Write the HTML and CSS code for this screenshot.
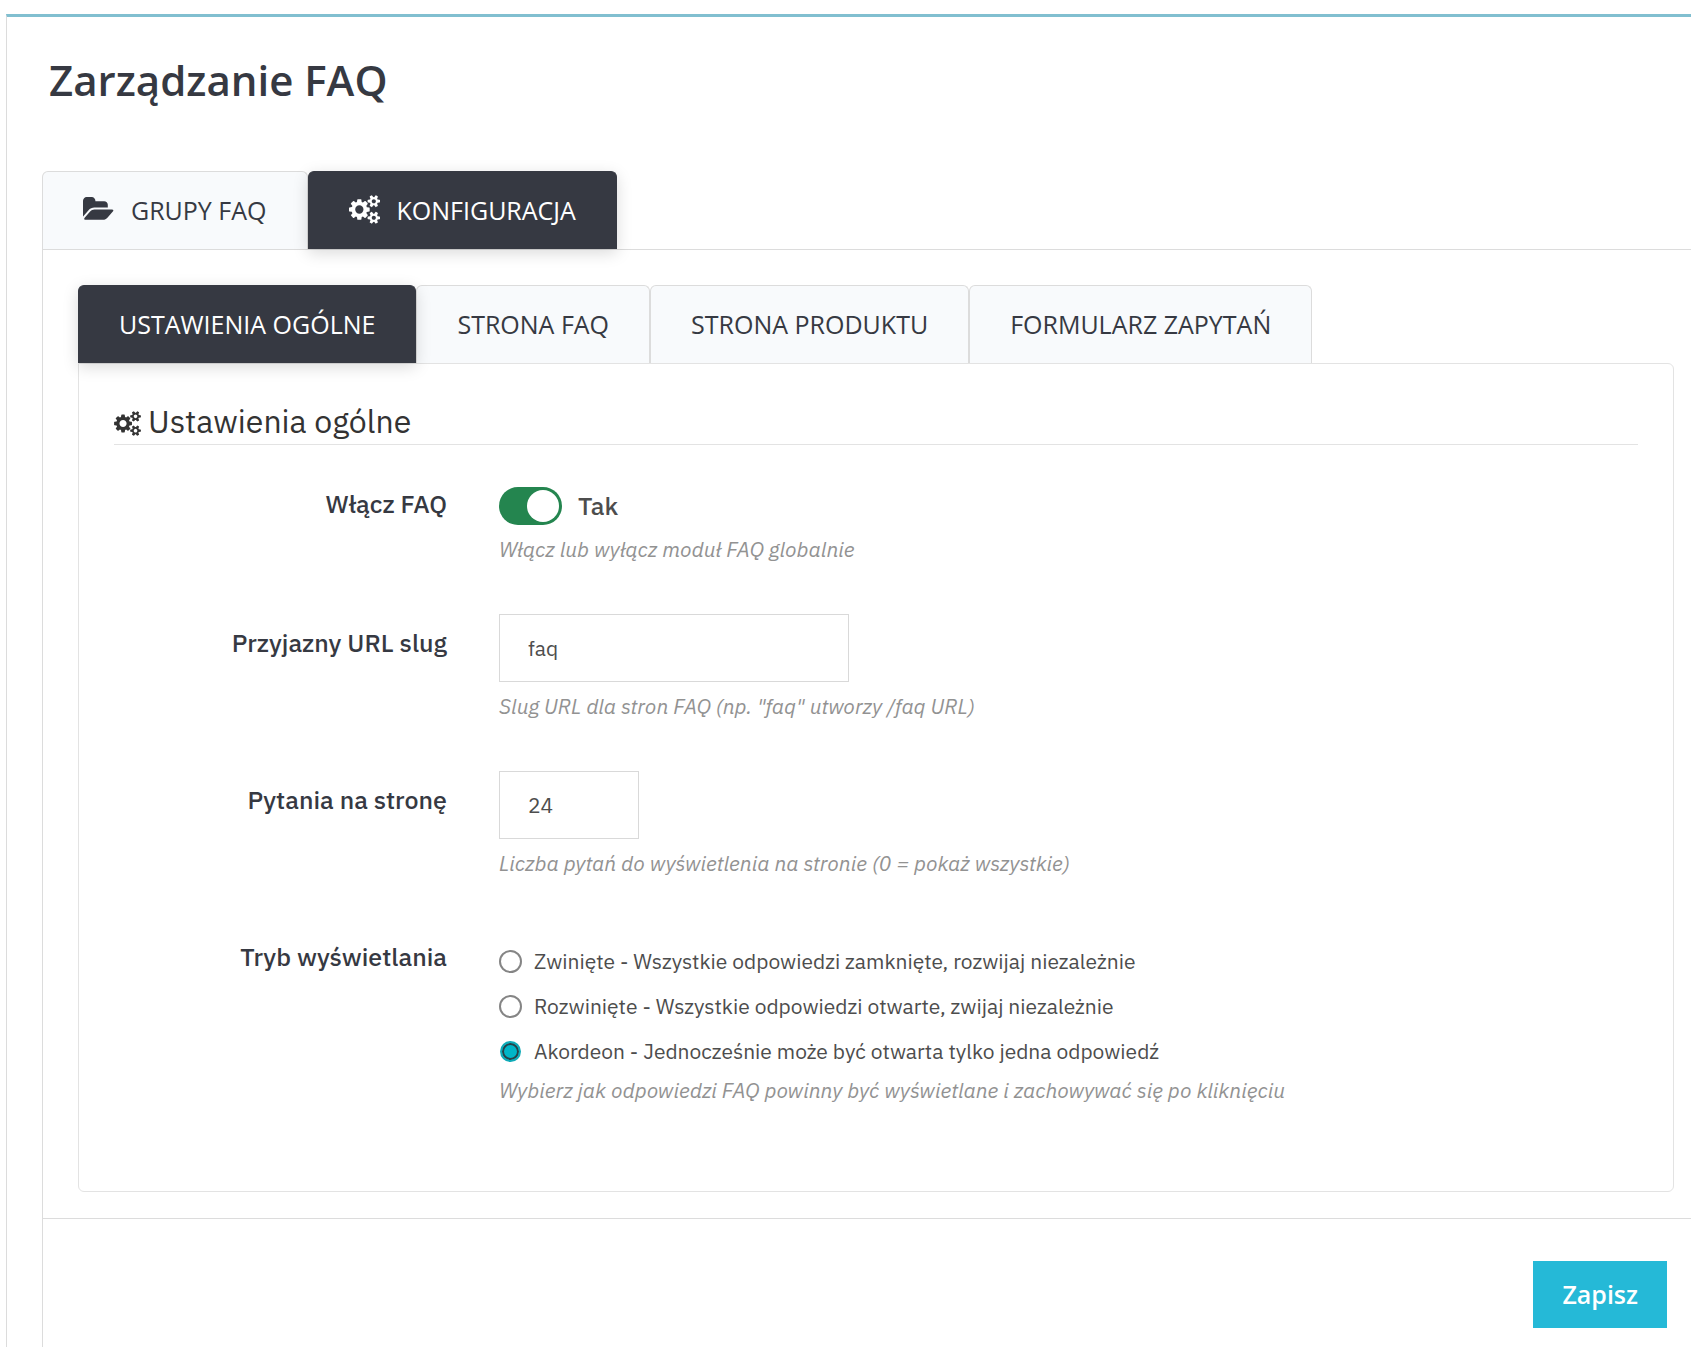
FILE: index.html
```
<!DOCTYPE html>
<html lang="pl">
<head>
	<meta charset="utf-8">
	<title>Zarządzanie FAQ</title>
	<meta name="viewport" content="width=device-width, initial-scale=1">
	<link rel="stylesheet" href="styles.css">
</head>
<body>
	<svg class="sprite" aria-hidden="true">
		<symbol id="icon-cogs" viewBox="0 0 1920 1792">
			<path d="M896 896q0-106-75-181t-181-75-181 75-75 181 75 181 181 75 181-75 75-181zm768 512q0-52-38-90t-90-38-90 38-38 90q0 53 37.5 90.5t90.5 37.5 90.5-37.5 37.5-90.5zm0-1024q0-52-38-90t-90-38-90 38-38 90q0 53 37.5 90.5t90.5 37.5 90.5-37.5 37.5-90.5zm-384 421v185q0 10-7 19.5t-16 10.5l-155 24q-11 35-32 76 34 48 90 115 7 11 7 20 0 12-7 19-23 30-82.5 89.5t-78.5 59.5q-11 0-21-7l-115-90q-37 19-77 31-11 108-23 155-7 24-30 24h-186q-11 0-20-7.5t-10-17.5l-23-153q-34-10-75-31l-118 89q-7 7-20 7-11 0-21-8-144-133-144-160 0-9 7-19 10-14 41-53t47-61q-23-44-35-82l-152-24q-10-1-17-9.5t-7-19.5v-185q0-10 7-19.5t16-10.5l155-24q11-35 32-76-34-48-90-115-7-11-7-20 0-12 7-20 22-30 82-89t79-59q11 0 21 7l115 90q34-18 77-32 11-108 23-154 7-24 30-24h186q11 0 20 7.5t10 17.5l23 153q34 10 75 31l118-89q8-7 20-7 11 0 21 8 144 133 144 160 0 8-7 19-12 16-42 54t-45 60q23 48 34 82l152 23q10 2 17 10.5t7 19.5zm640 533v140q0 16-149 31-12 27-30 52 51 113 51 138 0 4-4 7-122 71-124 71-8 0-46-47t-52-68q-20 2-30 2t-30-2q-14 21-52 68t-46 47q-2 0-124-71-4-3-4-7 0-25 51-138-18-25-30-52-149-15-149-31v-140q0-16 149-31 13-29 30-52-51-113-51-138 0-4 4-7 4-2 35-20t59-34 30-16q8 0 46 46.5t52 67.5q20-2 30-2t30 2q51-71 92-112l6-2q4 0 124 70 4 3 4 7 0 25-51 138 17 23 30 52 149 15 149 31zm0-1024v140q0 16-149 31-12 27-30 52 51 113 51 138 0 4-4 7-122 71-124 71-8 0-46-47t-52-68q-20 2-30 2t-30-2q-14 21-52 68t-46 47q-2 0-124-71-4-3-4-7 0-25 51-138-18-25-30-52-149-15-149-31v-140q0-16 149-31 13-29 30-52-51-113-51-138 0-4 4-7 4-2 35-20t59-34 30-16q8 0 46 46.5t52 67.5q20-2 30-2t30 2q51-71 92-112l6-2q4 0 124 70 4 3 4 7 0 25-51 138 17 23 30 52 149 15 149 31z"/>
		</symbol>
		<symbol id="icon-folder" viewBox="0 0 1920 1792">
			<path d="M1879 952q0 31-31 66l-336 396q-43 51-120.500 86.500t-143.500 35.500h-1088q-34 0-60.500-13t-26.500-43q0-31 31-66l336-396q43-51 120.500-86.500t143.500-35.500h1088q34 0 60.500 13t26.500 43zm-343-344v160h-832q-94 0-197 47.500t-164 119.500l-337 396-5 6q0-4-.5-12.500t-.5-12.500v-960q0-92 66-158t158-66h320q92 0 158 66t66 158v32h544q92 0 158 66t66 158z"/>
		</symbol>
	</svg>

	<main class="panel">
		<h1>Zarządzanie FAQ</h1>

		<nav class="tabs">
			<a class="tab" href="#groups"><svg class="icon"><use href="#icon-folder"/></svg>Grupy FAQ</a>
			<a class="tab active" href="#config"><svg class="icon"><use href="#icon-cogs"/></svg>Konfiguracja</a>
		</nav>

		<form class="content" id="config">
			<div class="content-body">
				<nav class="tabs">
					<a class="tab active" href="#general">Ustawienia ogólne</a>
					<a class="tab" href="#faq-page">Strona FAQ</a>
					<a class="tab" href="#product-page">Strona produktu</a>
					<a class="tab" href="#question-form">Formularz zapytań</a>
				</nav>

				<section class="box" id="general">
					<h2><svg class="icon"><use href="#icon-cogs"/></svg>Ustawienia ogólne</h2>

					<div class="row">
						<label class="name" for="enabled">Włącz FAQ</label>
						<div>
							<label class="toggle">
								<input type="checkbox" id="enabled" checked>
								<span>Tak</span>
							</label>
							<p class="hint">Włącz lub wyłącz moduł FAQ globalnie</p>
						</div>
					</div>

					<div class="row">
						<label class="name" for="slug">Przyjazny URL slug</label>
						<div>
							<input type="text" id="slug" class="field" value="faq">
							<p class="hint">Slug URL dla stron FAQ (np. "faq" utworzy /faq URL)</p>
						</div>
					</div>

					<div class="row">
						<label class="name" for="per-page">Pytania na stronę</label>
						<div>
							<input type="text" id="per-page" class="field field-small" value="24">
							<p class="hint">Liczba pytań do wyświetlenia na stronie (0 = pokaż wszystkie)</p>
						</div>
					</div>

					<div class="row" role="radiogroup" aria-labelledby="mode">
						<span class="name" id="mode">Tryb wyświetlania</span>
						<div>
							<div class="radios">
								<label><input type="radio" name="mode" value="collapsed">Zwinięte - Wszystkie odpowiedzi zamknięte, rozwijaj niezależnie</label>
								<label><input type="radio" name="mode" value="expanded">Rozwinięte - Wszystkie odpowiedzi otwarte, zwijaj niezależnie</label>
								<label><input type="radio" name="mode" value="accordion" checked>Akordeon - Jednocześnie może być otwarta tylko jedna odpowiedź</label>
							</div>
							<p class="hint">Wybierz jak odpowiedzi FAQ powinny być wyświetlane i zachowywać się po kliknięciu</p>
						</div>
					</div>
				</section>
			</div>

			<div class="footer">
				<button type="submit" class="save">Zapisz</button>
			</div>
		</form>
	</main>
</body>
</html>
```

FILE: styles.css
```
* {
	box-sizing: border-box;
}

body {
	margin: 0;
	min-height: 100vh;
	display: flex;
	flex-direction: column;
	background: #fff;
	color: #363942;
	font-family: "IBM Plex Sans", Roboto, sans-serif;
	font-size: 21px;
}

.sprite {
	display: none;
}

.icon {
	fill: currentColor;
}

.panel {
	flex: 1;
	display: flex;
	flex-direction: column;
	margin: 14px 0 0 6px;
	padding-left: 35px;
	border-top: 3px solid #81bfd0;
	border-left: 1px solid #dcdcdc;
}

h1 {
	margin: 33px 7px 61px;
	font: 600 42px/60px "Open Sans", sans-serif;
}

/* tabs */
.tabs {
	display: flex;
}

.tab {
	display: flex;
	align-items: center;
	height: 78px;
	padding: 0 40px 2px;
	border: 1px solid #dcdcdc;
	border-bottom: 0;
	border-radius: 6px 6px 0 0;
	background: #f8fafc;
	color: #363942;
	font: 25px/34px "Open Sans", sans-serif;
	text-decoration: none;
	text-transform: uppercase;
}

.tab.active {
	z-index: 1;
	border-color: #363942;
	background: #363942;
	color: #fff;
	box-shadow: 0 4px 16px rgba(0, 0, 0, 0.15);
}

.tab .icon {
	width: 31px;
	height: 29px;
	margin-right: 17px;
}

.content {
	flex: 1;
	border-top: 1px solid #dcdcdc;
	border-left: 1px solid #dcdcdc;
}

.content-body {
	padding: 35px 17px 26px 35px;
}

.box {
	padding: 35px 35px 36px;
	border: 1px solid #e3e3e3;
	border-radius: 0 6px 6px 6px;
}

h2 {
	display: flex;
	align-items: center;
	margin: 0 0 30px;
	padding-bottom: 1px;
	border-bottom: 1px solid #e3e3e3;
	color: #333;
	font-size: 32px;
	font-weight: 400;
	line-height: 44px;
}

h2 .icon {
	width: 27px;
	height: 25px;
	margin: 4px 7px 0 0;
}

/* form rows */
.row {
	display: grid;
	grid-template-columns: 333px 1fr;
	column-gap: 52px;
	margin-bottom: 49px;
}

.name {
	padding-top: 14px;
	font-size: 25px;
	font-weight: 500;
	line-height: 30px;
	text-align: right;
}

.hint {
	margin: 8px 0 0;
	color: #929292;
	font-style: italic;
	line-height: 32px;
}

.field {
	display: block;
	width: 350px;
	height: 68px;
	padding: 0 28px;
	border: 1px solid #d9d9d9;
	background: #fff;
	color: #4d4d4d;
	font: inherit;
}

.field-small {
	width: 140px;
}

.toggle {
	display: flex;
	align-items: center;
	gap: 16px;
	width: max-content;
	padding-top: 12px;
	color: #4d4d4d;
	font-size: 25px;
	font-weight: 500;
	line-height: 30px;
}

.toggle input {
	appearance: none;
	width: 63px;
	height: 38px;
	margin: 0;
	padding: 3px;
	border-radius: 19px;
	background: #24854f;
}

.toggle input::before {
	content: "";
	display: block;
	width: 32px;
	height: 32px;
	border-radius: 50%;
	background: #fff;
}

.toggle input:checked::before {
	margin-left: auto;
}

.radios {
	display: grid;
	gap: 15px;
	padding-top: 18px;
	color: #4d4d4d;
	line-height: 30px;
}

.radios label {
	display: flex;
	align-items: center;
	gap: 12px;
	width: max-content;
}

.radios input {
	appearance: none;
	width: 23px;
	height: 23px;
	margin: 0;
	border: 2px solid #858585;
	border-radius: 50%;
	background: #fff;
}

.radios input:checked {
	width: 21px;
	height: 21px;
	margin: 1px;
	border-color: #0fabb8;
	background: #00b5c7;
	box-shadow: inset 0 0 0 2px #274249;
}

.footer {
	display: flex;
	justify-content: flex-end;
	padding: 42px 24px 16px;
	border-top: 1px solid #dcdcdc;
}

.save {
	height: 67px;
	padding: 0 29px 2px;
	border: 0;
	background: #25b9d7;
	color: #fff;
	font: 600 25px/34px "Open Sans", sans-serif;
}
```
